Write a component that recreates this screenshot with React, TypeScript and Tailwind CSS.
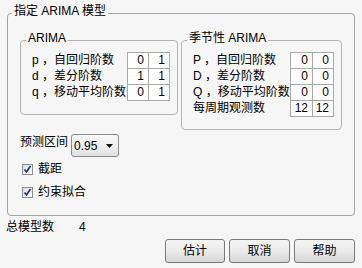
import React from "react";

const arimaRows = [
  { label: "p ，自回归阶数", a: "0", b: "1" },
  { label: "d ，差分阶数", a: "1", b: "1" },
  { label: "q ，移动平均阶数", a: "0", b: "1" },
];

const seasonalRows = [
  { label: "P ，自回归阶数", a: "0", b: "0" },
  { label: "D ，差分阶数", a: "0", b: "0" },
  { label: "Q ，移动平均阶数", a: "0", b: "0" },
  { label: "每周期观测数", a: "12", b: "12" },
];

type Row = { label: string; a: string; b: string };

function OrderTable({ rows, labelWidth, cols }: { rows: Row[]; labelWidth: string; cols: string }) {
  return (
    <div className="flex items-start">
      <div className={`flex flex-col ${labelWidth}`}>
        {rows.map((r) => (
          <div key={r.label} className="h-[16px] leading-[16px] whitespace-nowrap">
            {r.label}
          </div>
        ))}
      </div>
      <div className={`grid ${cols} gap-px p-px bg-[#a9a9a9]`}>
        {rows.map((r) => (
          <React.Fragment key={r.label}>
            <div className="h-[15px] leading-[15px] bg-white text-right pr-[4px]">{r.a}</div>
            <div className="h-[15px] leading-[15px] bg-white text-right pr-[4px]">{r.b}</div>
          </React.Fragment>
        ))}
      </div>
    </div>
  );
}

function Check({ label }: { label: string }) {
  return (
    <div className="flex items-center h-[16px] pl-[2px] gap-[5px]">
      <div className="w-[11px] h-[11px] border border-[#8e8f8f] bg-gradient-to-br from-[#dcdcdc] to-white flex items-center justify-center">
        <svg width="9" height="9" viewBox="0 0 9 9">
          <path d="M1.5 4.5 L3.5 7 L7.5 1" fill="none" stroke="#1e2f7a" strokeWidth="1.6" />
        </svg>
      </div>
      <span className="leading-[16px]">{label}</span>
    </div>
  );
}

function Btn({ label, w }: { label: string; w: string }) {
  return (
    <button className={`${w} h-[24px] rounded-[3px] border border-[#7a7a7a] bg-gradient-to-b from-[#f4f4f4] via-[#ebebeb] to-[#d6d6d6] text-[12px] leading-[16px]`}>
      {label}
    </button>
  );
}

export default function App() {
  return (
    <div
      className="w-[362px] h-[268px] bg-[#f6f6f6] text-[12px] text-black pt-[3px] overflow-hidden"
      style={{ fontFamily: '"Liberation Sans", "Noto Sans CJK SC", sans-serif' }}
    >
      <fieldset className="ml-[7px] w-[348px] border border-[#a3a3a3] rounded-[4px] pt-[7px] pl-[12px] pr-[12px] pb-[15px]">
        <legend className="-ml-[8px] px-[2px] leading-[16px] pb-[4px]">指定 ARIMA 模型</legend>

        <div className="flex items-start gap-[3px]">
          <fieldset className="w-[158px] border border-[#b3b3b3] rounded-[4px] pt-[2px] pl-[11px] pr-[7px] pb-[13px]">
            <legend className="-ml-[6px] px-[2px] leading-[16px] pb-[4px]">ARIMA</legend>
            <OrderTable rows={arimaRows} labelWidth="w-[95px]" cols="grid-cols-[20px_20px]" />
          </fieldset>
          <fieldset className="w-[161px] border border-[#b3b3b3] rounded-[4px] pt-[2px] pl-[11px] pr-[7px] pb-[12px]">
            <legend className="-ml-[6px] px-[2px] leading-[16px] pb-[4px]">季节性 ARIMA</legend>
            <OrderTable rows={seasonalRows} labelWidth="w-[97px]" cols="grid-cols-[21px_20px]" />
          </fieldset>
        </div>

        <div className="flex items-start mt-[4px] gap-[3px]">
          <span className="leading-[16px]">预测区间</span>
          <div className="w-[48px] h-[23px] rounded-[3px] border border-[#8c8c8c] bg-gradient-to-b from-[#fafafa] to-[#e2e2e2] flex items-center pl-[2px] pr-[5px] justify-between">
            <span className="leading-[16px] pt-[1px]">0.95</span>
            <svg width="7" height="4" viewBox="0 0 7 4">
              <path d="M0 0 H7 L3.5 4 Z" fill="#111" />
            </svg>
          </div>
        </div>

        <div className="flex flex-col gap-[7px] mt-[4px]">
          <Check label="截距" />
          <Check label="约束拟合" />
        </div>
      </fieldset>

      <div className="flex items-center pl-[6px] mt-[3px] h-[16px]">
        <span className="w-[73px] leading-[16px]">总模型数</span>
        <span className="leading-[16px]">4</span>
      </div>

      <div className="flex justify-end gap-[4px] pr-[7px] mt-[4px]">
        <Btn label="估计" w="w-[60px]" />
        <Btn label="取消" w="w-[61px]" />
        <Btn label="帮助" w="w-[61px]" />
      </div>
    </div>
  );
}
